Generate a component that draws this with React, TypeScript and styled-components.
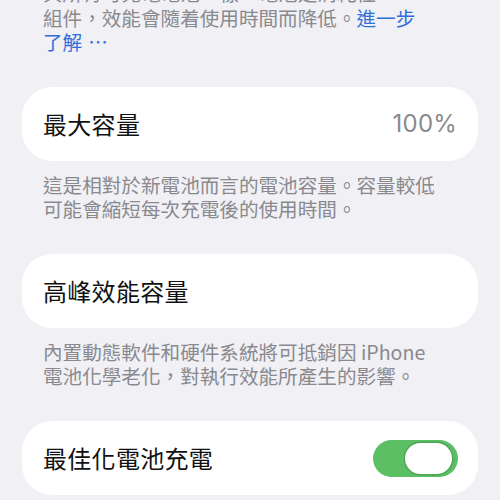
import React, { useState } from 'react'
import styled, { createGlobalStyle } from 'styled-components'

const GlobalStyle = createGlobalStyle`
  html, body {
    margin: 0;
    padding: 0;
    background: #f0f0f5;
    overflow: hidden;
  }
  body {
    font-family: "Noto Sans CJK TC", "Noto Sans", sans-serif;
    -webkit-font-smoothing: antialiased;
  }
`

const Page = styled.div`
  width: 500px;
  height: 500px;
  overflow: hidden;
  background: #f0f0f5;
`

const Content = styled.div`
  display: flex;
  flex-direction: column;
  padding: 0 22px;
  margin-top: -19px;
`

const Note = styled.p<{ mb?: number }>`
  margin: 0 0 ${({ mb }) => mb ?? 32}px;
  padding: 0 21px;
  font-size: 19.6px;
  line-height: 24.5px;
  color: #89898e;
`

const Link = styled.span`
  color: #2f6fdc;
`

const Dots = styled.span`
  margin-left: 6px;
  letter-spacing: 1px;
`

const Card = styled.div`
  height: 74px;
  background: #ffffff;
  border-radius: 30px;
  display: flex;
  align-items: center;
  justify-content: space-between;
  padding: 0 21px;
  margin-bottom: 12px;
`

const Title = styled.span`
  font-size: 24px;
  color: #111111;
  letter-spacing: 0.3px;
`

const Value = styled.span`
  font-family: "Inter", "Noto Sans", sans-serif;
  font-size: 24px;
  color: #8a8a8e;
  letter-spacing: 0.2px;
`

const Toggle = styled.button<{ on: boolean }>`
  width: 85px;
  height: 37px;
  border-radius: 19px;
  border: none;
  padding: 0;
  margin: 2px -1px 0 0;
  background: ${({ on }) => (on ? '#5dbf64' : '#e5e5ea')};
  position: relative;
  cursor: pointer;
`

const Knob = styled.span<{ on: boolean }>`
  position: absolute;
  top: 3px;
  left: ${({ on }) => (on ? '32px' : '3px')};
  width: 47px;
  height: 31px;
  border-radius: 16px;
  background: #ffffff;
  box-shadow: 0 0 0 1.5px #4fa556;
`

export default function App() {
  const [optimized, setOptimized] = useState(true)
  return (
    <Page>
      <GlobalStyle />
      <Content>
        <Note mb={32}>
          與所有可充電電池一樣，電池是消耗性
          <br />
          組件，效能會隨着使用時間而降低。<Link>進一步</Link>
          <br />
          <Link>
            了解<Dots>⋯</Dots>
          </Link>
        </Note>

        <Card>
          <Title>最大容量</Title>
          <Value>100%</Value>
        </Card>
        <Note>
          這是相對於新電池而言的電池容量。容量較低
          <br />
          可能會縮短每次充電後的使用時間。
        </Note>

        <Card>
          <Title>高峰效能容量</Title>
        </Card>
        <Note>
          內置動態軟件和硬件系統將可抵銷因 iPhone
          <br />
          電池化學老化，對執行效能所產生的影響。
        </Note>

        <Card>
          <Title>最佳化電池充電</Title>
          <Toggle on={optimized} onClick={() => setOptimized(!optimized)}>
            <Knob on={optimized} />
          </Toggle>
        </Card>
      </Content>
    </Page>
  )
}
